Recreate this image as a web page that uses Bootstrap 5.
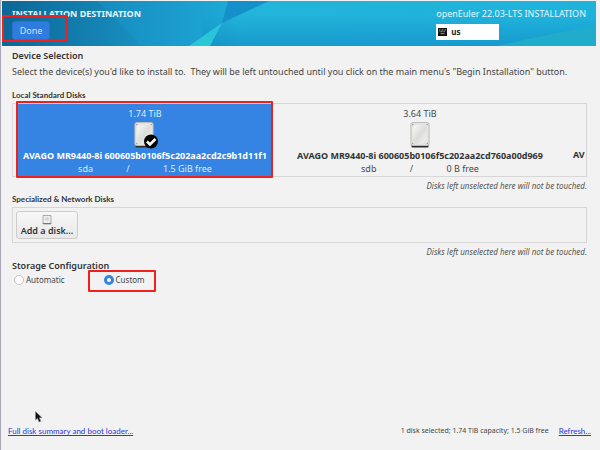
<!DOCTYPE html>
<html lang="en">
<head>
<meta charset="utf-8">
<meta name="viewport" content="width=device-width, initial-scale=1">
<title>Installation Destination</title>
<link href="https://cdn.jsdelivr.net/npm/bootstrap@5.3.0/dist/css/bootstrap.min.css" rel="stylesheet">
<style>
body { font-family: "Noto Sans", sans-serif; font-size: 9px; line-height: 14px; color: #454545; background: #f2f2f2; border-left: 1px solid #a9a7b8; }
.installer { padding-top: 1px; }
.banner { height: 45px; margin: 0 4px 0 1px; color: #fff; padding: 6px 10px 0 10px; }
.banner-art { inset: 0; width: 100%; height: 100%; }
.title-text { font-weight: 700; color: #e4f4fb; }
.product { color: #e4f4fb; }
.btn-done { display: block; width: 38px; height: 19px; font-size: 9px; line-height: 17px; color: #cfe2fb; background: #2f7be0; border: 1px solid #2a70d0; border-radius: 3px; padding: 0; }
.keyboard { width: 63px; height: 16px; margin-top: 3px; padding: 0 2px; font-size: 8px; font-weight: 700; color: #222; background: #fff; border: 0; }
.content { padding: 3px 13px 0 11px; }
h2 { font-size: 9px; line-height: 14px; font-weight: 600; margin: 0; color: #333; }
h3 { font-family: Lato, "Noto Sans", sans-serif; font-size: 8px; line-height: 12px; font-weight: 700; margin: 0 0 2px; color: #333; }
.intro { margin: 2px 0 10px; }
.disk-list { border: 1px solid #d8d6d6; overflow: hidden; height: 74px; padding-left: 4px; }
.disk { width: 256px; flex: none; padding: 2px 0 0; margin: 0; border: 0; background: none; color: #4a4a4a; }
.disk-on { background: #3584e4; color: #dcebfc; }
.disk-size { line-height: 14px; }
.disk-info { line-height: 12px; }
.disk-name { line-height: 14px; font-weight: 700; white-space: nowrap; color: #333; }
.disk-on .disk-name { color: #fff; }
.disk-gap { margin-left: 19px; }
.disk-next { padding: 44px 0 0 25px; }
.slash { width: 70px; text-align: center; }
.hint { font-size: 8px; line-height: 12px; margin: 3px 0 1px; font-style: italic; text-align: right; color: #555; }
.network { border: 1px solid #d8d6d6; padding: 3px; height: 36px; }
.btn-add { width: 62px; height: 28px; font-size: 9px; line-height: 12px; font-weight: 600; color: #333; padding: 2px 0 0; background: linear-gradient(#f7f7f7, #e8e8e8); border: 1px solid #cfcccb; border-radius: 3px; }
.form-check-input.pick { width: 10px; height: 10px; margin: 0 0 0 2px; background: #fff; border: 1px solid #c8c4c2; box-shadow: none; }
.form-check-input.pick:checked { border: 3px solid #3584e4; background: #fff; }
.pick-label { font-size: 8px; line-height: 12px; }
.pick-row { gap: 37px; margin-top: 1px; }
.pick-pair { gap: 2px; }
.red-frame { border: 2px solid #f0201c; pointer-events: none; border-radius: 1px; }
.frame-done { left: -10px; top: -6px; width: 66px; height: 27px; }
.frame-disk { left: 4px; top: -2px; width: 257px; height: 77px; }
.frame-custom { left: -14px; top: -4px; width: 68px; height: 22px; }
.footer-bar { font-size: 8px; line-height: 12px; padding: 0 9px 13px 7px; }
.footer-bar a { font-family: Lato, "Noto Sans", sans-serif; color: #3333e0; }
.footer-note { font-size: 7px; margin-right: 10px; }
.pointer { left: 34px; bottom: 27px; }
</style>
<script src="https://cdn.jsdelivr.net/npm/bootstrap@5.3.0/dist/js/bootstrap.bundle.min.js"></script>
</head>
<body>
<svg class="position-absolute" width="0" height="0" aria-hidden="true">
  <defs>
    <linearGradient id="metal" x2="1" y2="1"><stop stop-color="#fafafa"/><stop offset=".5" stop-color="#dcdcda"/><stop offset="1" stop-color="#f6f6f6"/></linearGradient>
  </defs>
  <symbol id="drive" viewBox="0 0 22 26" preserveAspectRatio="none">
    <path d="M1.500 3Q1.500 1 3.500 1H18.500Q20.500 1 20.500 3V24Q20.500 25.500 19 25.500H3Q1.500 25.500 1.500 24Z" fill="#2c2c2a"/>
    <path d="M1 2.500Q1 .5 3 .5H19Q21 .5 21 2.500V22Q21 23.500 19.500 23.500H2.500Q1 23.500 1 22Z" fill="#e4e4e2" stroke="#bdbbb8"/>
    <path d="M3 6Q4 3 7 3H15Q18 3 19 6V14Q18 20 12 22H6Q4 21 3 18Z" fill="url(#metal)"/>
    <g fill="#999"><circle cx="3" cy="2.500" r=".8"/><circle cx="19" cy="2.500" r=".8"/><circle cx="3" cy="21.500" r=".8"/><circle cx="19" cy="21.500" r=".8"/></g>
  </symbol>
</svg>
<div class="installer d-flex flex-column min-vh-100 position-relative">
  <header class="banner position-relative d-flex justify-content-between">
    <svg class="banner-art position-absolute" viewBox="0 0 594 45" preserveAspectRatio="none" aria-hidden="true">
      <defs>
        <linearGradient id="sea"><stop stop-color="#0b6796"/><stop offset=".16" stop-color="#1482b3"/><stop offset=".3" stop-color="#1c9dcd"/><stop offset=".4" stop-color="#22b4d9"/><stop offset="1" stop-color="#1fb3dc"/></linearGradient>
        <linearGradient id="deep" x2="0" y2="1"><stop offset=".3" stop-color="#0c80c0" stop-opacity="0"/><stop offset="1" stop-color="#0c80c0" stop-opacity=".5"/></linearGradient>
      </defs>
      <path fill="url(#sea)" d="M0 0H594V45H0Z"/>
      <path fill="url(#deep)" d="M200 0H594V45H200Z"/>
      <path fill="#1a9fd2" opacity=".35" d="M95 0H226L220 22L187 45H140Z"/>
      <path fill="#1590cb" d="M226 0H267L220 22Z"/>
      <path fill="#29c6d8" d="M220 22L187 45H208Z"/>
      <path fill="#20adcb" d="M594 25Q550 32 495 45H594Z"/>
    </svg>
    <div class="position-relative">
      <div class="title-text">INSTALLATION DESTINATION</div>
      <div class="position-relative">
        <button type="button" class="btn btn-done">Done</button>
        <div class="red-frame frame-done position-absolute"></div>
      </div>
    </div>
    <div class="position-relative">
      <div class="product">openEuler 22.03-LTS INSTALLATION</div>
      <button type="button" class="keyboard d-flex align-items-center gap-1" aria-label="Keyboard layout us">
        <svg width="9" height="8" viewBox="0 0 9 8" aria-hidden="true"><path fill="#111" d="M0 0H9V8H0Z"/><path stroke="#ccc" stroke-width=".8" stroke-dasharray="1 .5" d="M1 2H8M1.500 3.700H7.500"/><path stroke="#999" d="M2.500 5.700H6.500"/></svg>
        us
      </button>
    </div>
  </header>

  <main class="content flex-grow-1">
    <h2>Device Selection</h2>
    <p class="intro">Select the device(s) you'd like to install to.&nbsp; They will be left untouched until you click on the main menu's "Begin Installation" button.</p>
    <section>
      <h3>Local Standard Disks</h3>
      <div class="position-relative">
        <div class="disk-list d-flex">
          <button type="button" class="disk disk-on" aria-pressed="true">
            <div class="disk-size">1.74 TiB</div>
            <svg class="d-block mx-auto" width="26" height="28" viewBox="0 0 26 28" aria-hidden="true"><use href="#drive" x="2" y="1" width="20" height="26"/><circle cx="19" cy="20.500" r="7" fill="#050505"/><path d="M15 20.500L18 23.500L23.500 18" fill="none" stroke="#fff" stroke-width="2.600"/></svg>
            <div class="disk-name">AVAGO MR9440-8i 600605b0106f5c202aa2cd2c9b1d11f1</div>
            <div class="disk-info d-flex justify-content-center"><span>sda</span><span class="slash">/</span><span>1.5 GiB free</span></div>
          </button>
          <button type="button" class="disk disk-gap" aria-pressed="false">
            <div class="disk-size">3.64 TiB</div>
            <svg class="d-block mx-auto" width="26" height="28" viewBox="0 0 26 28" aria-hidden="true"><use href="#drive" x="3" y="1" width="20" height="26"/></svg>
            <div class="disk-name">AVAGO MR9440-8i 600605b0106f5c202aa2cd760a00d969</div>
            <div class="disk-info d-flex justify-content-center"><span>sdb</span><span class="slash">/</span><span>0 B free</span></div>
          </button>
          <div class="disk-next disk-name">AV</div>
        </div>
        <div class="red-frame frame-disk position-absolute"></div>
      </div>
      <div class="hint">Disks left unselected here will not be touched.</div>
    </section>
    <section>
      <h3>Specialized &amp; Network Disks</h3>
      <div class="network">
        <button type="button" class="btn btn-add d-block">
          <svg class="d-block mx-auto" width="10" height="10" viewBox="0 0 10 10" aria-hidden="true"><path fill="#eee" stroke="#aaa" d="M1 .5H9V9H1Z"/><path stroke="#777" d="M1 8.500H9"/><circle cx="5" cy="4" r="2" fill="#d5d5d5"/></svg>
          Add a disk...
        </button>
      </div>
      <div class="hint">Disks left unselected here will not be touched.</div>
    </section>
    <section>
      <h2>Storage Configuration</h2>
      <div class="pick-row d-flex">
        <div class="pick-pair d-flex align-items-center"><input class="form-check-input pick" type="radio" name="storage" id="auto"><label class="pick-label" for="auto">Automatic</label></div>
        <div class="pick-pair d-flex align-items-center position-relative"><input class="form-check-input pick" type="radio" name="storage" id="custom" checked><label class="pick-label" for="custom">Custom</label><div class="red-frame frame-custom position-absolute"></div></div>
      </div>
    </section>
  </main>

  <footer class="footer-bar d-flex">
    <a href="#">Full disk summary and boot loader...</a>
    <span class="footer-note ms-auto">1 disk selected; 1.74 TiB capacity; 1.5 GiB free</span>
    <a href="#">Refresh...</a>
  </footer>
  <svg class="pointer position-absolute" width="8" height="12" viewBox="0 0 8 12" aria-hidden="true"><path d="M.5 .5V9L2.500 7.300L4 11L5.800 10.200L4.300 6.700H7Z" fill="#111" stroke="#888" stroke-width=".5"/></svg>
</div>
</body>
</html>
